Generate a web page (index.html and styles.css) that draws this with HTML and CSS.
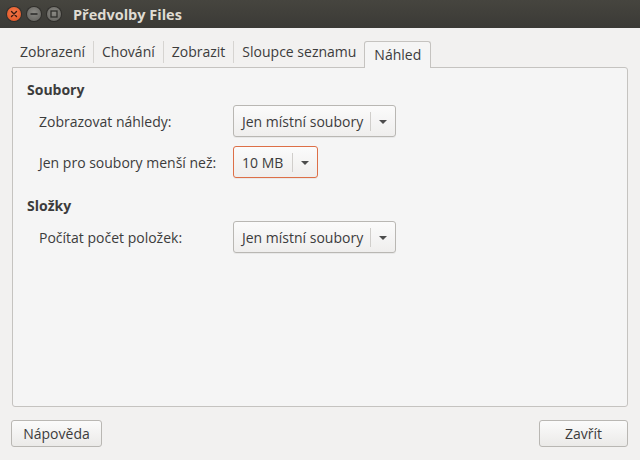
FILE: index.html
```html
<!DOCTYPE html>
<html lang="cs">
<head>
<meta charset="utf-8">
<title>Předvolby Files</title>
<link rel="stylesheet" href="styles.css">
</head>
<body>
<div class="window">
  <div class="titlebar">
    <div class="controls">
      <span class="wbtn close"><svg width="14" height="14" viewBox="0 0 14 14"><path d="M4.5 4.5 L9.5 9.5 M9.5 4.5 L4.5 9.5" stroke="#3a1a10" stroke-width="1.4" stroke-linecap="round"/></svg></span>
      <span class="wbtn"><svg width="14" height="14" viewBox="0 0 14 14"><path d="M3.5 7 H10.5" stroke="#2e2e2c" stroke-width="1.6"/></svg></span>
      <span class="wbtn"><svg width="14" height="14" viewBox="0 0 14 14"><rect x="4" y="4" width="6" height="6" fill="none" stroke="#2e2e2c" stroke-width="1.3"/></svg></span>
    </div>
    <div class="title">Předvolby Files</div>
  </div>

  <div class="content">
    <div class="tabs">
      <div class="tab">Zobrazení</div>
      <div class="tab">Chování</div>
      <div class="tab">Zobrazit</div>
      <div class="tab">Sloupce seznamu</div>
      <div class="tab active">Náhled</div>
    </div>
    <div class="panel">
      <h3 class="section">Soubory</h3>
      <div class="row">
        <span class="label">Zobrazovat náhledy:</span>
        <span class="combo wide"><span class="value">Jen místní soubory</span><span class="arrow"></span></span>
      </div>
      <div class="row">
        <span class="label">Jen pro soubory menší než:</span>
        <span class="combo narrow focus"><span class="value">10 MB</span><span class="arrow"></span></span>
      </div>
      <h3 class="section second">Složky</h3>
      <div class="row">
        <span class="label">Počítat počet položek:</span>
        <span class="combo wide"><span class="value">Jen místní soubory</span><span class="arrow"></span></span>
      </div>
    </div>
    <div class="footer">
      <button class="btn help">Nápověda</button>
      <button class="btn close-btn">Zavřít</button>
    </div>
  </div>
</div>
</body>
</html>
```

FILE: styles.css
```css
body
        {
        margin:0;
        width:640px;
        height:460px;
        overflow:hidden;
        background:#f2f1f0;
        font-family:"Open Sans","Noto Sans",sans-serif;
        font-size:14px;
        color:#3c3c3c;
        }
.titlebar
        {
        height:28px;
        display:flex;
        align-items:center;
        background:linear-gradient(#46453f,#3b3a36);
        }
.controls
        {
        display:flex;
        gap:6px;
        padding-left:7px;
        }
.wbtn
        {
        width:14px;
        height:14px;
        border-radius:50%;
        background:radial-gradient(circle at 50% 40%,#8a8984,#5f5e5a);
        box-shadow:0 0 0 1px #2f2e2b;
        display:flex;
        }
.wbtn.close
        {
        background:radial-gradient(circle at 50% 40%,#f47a4c,#e0501f);
        }
.title
        {
        margin-left:12px;
        color:#dfdbd2;
        font-weight:bold;
        font-size:14.5px;
        }
.content
        {
        padding:13px 12px 0 12px;
        }
.tabs
        {
        display:flex;
        height:26px;
        align-items:flex-end;
        }
.tab
        {
        padding:0 8px;
        height:22px;
        line-height:22px;
        border-left:1px solid #d6d4d1;
        margin-bottom:4px;
        }
.tab:first-child
        {
        border-left:0;
        }
.tab.active
        {
        height:26px;
        line-height:26px;
        margin:0 0 -1px 0;
        padding:0 9px;
        border:1px solid #c5c3c0;
        border-bottom:0;
        border-radius:3px 3px 0 0;
        background:#f5f5f5;
        position:relative;
        z-index:1;
        }
.panel
        {
        height:338px;
        border:1px solid #c5c3c0;
        border-radius:0 3px 3px 3px;
        background:#f5f5f5;
        padding:0 14px;
        }
.section
        {
        margin:12px 0 6px 0;
        font-size:14px;
        font-weight:bold;
        color:#3c3c3c;
        }
.section.second
        {
        margin-top:18px;
        }
.row
        {
        display:flex;
        align-items:center;
        height:32px;
        margin-bottom:9px;
        padding-left:12px;
        }
.label
        {
        width:194px;
        }
.combo
        {
        display:flex;
        align-items:center;
        height:30px;
        border:1px solid #b9b7b3;
        border-radius:3px;
        background:linear-gradient(#fbfbfb,#efeeed);
        box-shadow:0 1px 0 rgba(0,0,0,0.05);
        }
.combo.wide
        {
        width:161px;
        }
.combo.narrow
        {
        width:83px;
        }
.combo.focus
        {
        border-color:#dd6f47;
        }
.value
        {
        flex:1;
        padding-left:8px;
        white-space:nowrap;
        overflow:hidden;
        }
.arrow
        {
        width:24px;
        height:19px;
        border-left:1px solid #d0cecb;
        position:relative;
        }
.arrow::after
        {
        content:"";
        position:absolute;
        left:8px;
        top:8px;
        border-left:4px solid transparent;
        border-right:4px solid transparent;
        border-top:4px solid #4c4c4c;
        }
.footer
        {
        display:flex;
        justify-content:space-between;
        padding-top:13px;
        }
.btn
        {
        height:27px;
        border:1px solid #b9b7b3;
        border-radius:3px;
        background:linear-gradient(#fbfbfb,#ebeae8);
        font:inherit;
        color:#3c3c3c;
        padding:0 9px;
        }
.btn.help
        {
        margin-left:-1px;
        width:91px;
        }
.btn.close-btn
        {
        width:89px;
        }
```
